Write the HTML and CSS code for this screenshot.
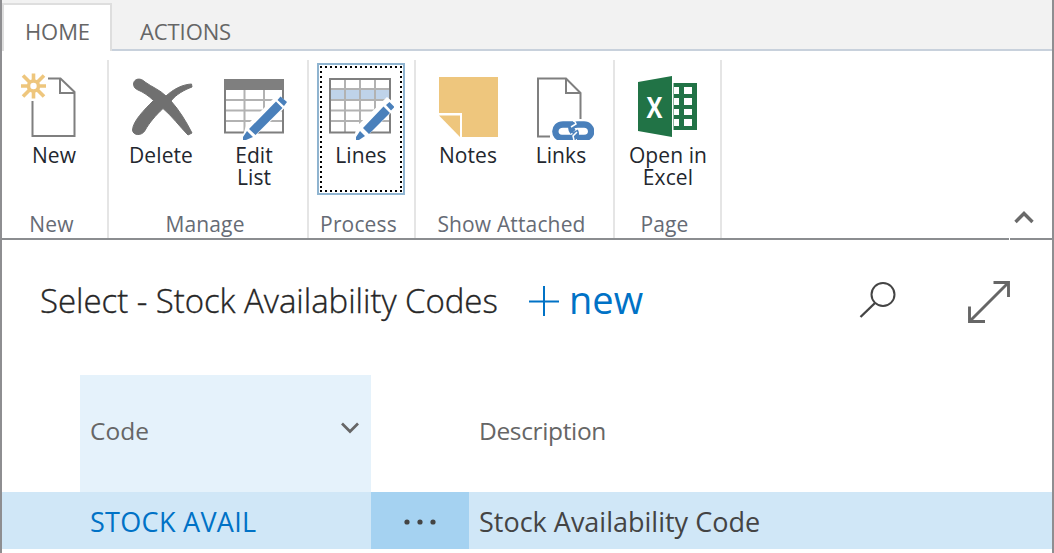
FILE: index.html
```
<!DOCTYPE html>
<html lang="en">
<head>
<meta charset="utf-8">
<title>Select - Stock Availability Codes</title>
<link rel="stylesheet" href="styles.css">
</head>
<body>
<div class="window">
  <nav class="tabs">
    <div class="tab tab-active">HOME</div>
    <div class="tab">ACTIONS</div>
  </nav>

  <div class="ribbon">
    <section class="group narrow">
      <div class="buttons">
        <div class="button b-new">
          <svg class="icon" width="66" height="68" viewBox="0 0 66 68">
            <path d="M27 6.500H39.500L53.500 20V64H11.500V29" fill="none" stroke="#7f7f7f" stroke-width="2"/>
            <path d="M39 6V21H53" fill="none" stroke="#7f7f7f" stroke-width="2"/>
            <g stroke="#eec67d" stroke-width="3.600" fill="none"><circle cx="12.500" cy="14" r="5"/><path d="M12.500 1.500V8M12.500 20V26.500M0 14H6.500M18.500 14H25M2 3.500L8.500 10M16.500 18L23 24.500M23 3.500L16.500 10M8.500 18L2 24.500"/></g>
          </svg>
          <span>New</span>
        </div>
      </div>
      <div class="caption">New</div>
    </section>

    <section class="group g-manage">
      <div class="buttons">
        <div class="button b-delete">
          <svg class="icon" width="66" height="68" viewBox="0 0 66 68">
            <path d="M7 8.500C10 6 14 7 17 10C24 15 32 18 38 24C45 17.500 54 12.500 63.500 12L64 15C56 18 48 22.500 43 29C51 38 58 49 64 61L60 63C52 55 44 44 35 36.500C28 43 21 51 17 58.500C14 64 5 64 4.500 58C5 49 16 38 25.500 28.500C21 24 15 20 10 18C5 16 4.500 11 7 8.500Z" fill="#707070" stroke="#707070" stroke-width="1"/>
          </svg>
          <span>Delete</span>
        </div>
        <div class="button b-edit">
          <svg class="icon" width="66" height="68" viewBox="0 0 66 68">
            <path d="M5 28H62M5 38.500H62M5 49H62M23.500 18V61M43 18V38" stroke="#b2b2b2" stroke-width="2" fill="none"/>
            <path d="M4 8H62V60.500H4Z" fill="none" stroke="#7f7f7f" stroke-width="2"/>
            <path d="M3 7H63V18H3Z" fill="#7f7f7f"/>
            <path d="M20 69L25 54L56 23L69 31L32 66Z" fill="#fff"/>
            <path d="M59.500 24.500L66 30L63 34L56.500 28ZM55 29.500L61.500 36L34.500 63L28 57ZM26 59L32 65L25 68H22V65Z" fill="#4a80bb"/>
          </svg>
          <span>Edit</span><span>List</span>
        </div>
      </div>
      <div class="caption">Manage</div>
    </section>

    <section class="group narrow">
      <div class="buttons">
        <div class="button b-lines">
          <svg class="icon" width="66" height="68" viewBox="2 0 66 68">
            <path d="M4 17H65V28H4Z" fill="#bfd3ea"/>
            <path d="M4 17H64M4 28H64M4 38.500H64M4 49H64M19 8V60M34 8V60M49 8V38" stroke="#b2b2b2" stroke-width="2" fill="none"/>
            <path d="M4 7H64V60.500H4Z" fill="none" stroke="#7f7f7f" stroke-width="2"/>
            <path d="M27 69L31 54L61 25L72 34L39 66Z" fill="#fff"/>
            <path d="M63.500 30L68.500 35L65 38.500L60 33ZM57.500 34.500L64 41L43 62L37 56ZM34 59L39 64L33 68H30V65Z" fill="#4a80bb"/>
          </svg>
          <span>Lines</span>
        </div>
      </div>
      <div class="caption">Process</div>
    </section>

    <section class="group g-attached">
      <div class="buttons">
        <div class="button b-notes">
          <svg class="icon" width="66" height="68" viewBox="0 0 66 68">
            <path d="M4 5H63V65H27V41H4Z" fill="#eec67d"/>
            <path d="M4 43.500H25V65Z" fill="#eec67d"/>
          </svg>
          <span>Notes</span>
        </div>
        <div class="button b-links">
          <svg class="icon" width="66" height="68" viewBox="0 0 66 68">
            <path d="M22 64.500H10V6.500H38L52.500 21V47" fill="none" stroke="#7f7f7f" stroke-width="2"/>
            <path d="M38 6V21H52" fill="none" stroke="#7f7f7f" stroke-width="2"/>
            <path d="M45 52.500H35C25 52.500 25 66 34 66H42C47 66 49 63 47 59M49 66H56C66 66 65 52.500 56 52.500H50C43 52.500 42 56 45 60" fill="none" stroke="#4a80bb" stroke-width="6.400"/>
            <path d="M46 48L48 52L43 55M49 60L45 64L46 68" fill="none" stroke="#fff" stroke-width="1.500"/>
          </svg>
          <span>Links</span>
        </div>
      </div>
      <div class="caption">Show Attached</div>
    </section>

    <section class="group narrow">
      <div class="buttons">
        <div class="button b-excel">
          <svg class="icon" width="66" height="68" viewBox="0 0 66 68">
            <path d="M38 11H62V58H38Z" fill="#217346"/>
            <path d="M39 15H44V22H39ZM49 15H57V22H49ZM39 26H44V33H39ZM49 26H57V33H49ZM39 37H44V43H39ZM49 37H57V43H49ZM39 47H44V54H39ZM49 47H57V54H49Z" fill="#fff"/>
            <path d="M3 10L37 4V65L3 59Z" fill="#217346"/>
            <path d="M37 4H38.500V65H37Z" fill="#fff"/>
            <text class="excel-x" x="11.500" y="45.500" textLength="16" lengthAdjust="spacingAndGlyphs">X</text>
          </svg>
          <span>Open in</span><span>Excel</span>
        </div>
      </div>
      <div class="caption">Page</div>
    </section>

    <svg class="collapse" width="20" height="14" viewBox="0 0 20 14"><path d="M1.500 12L10 3.500L18.500 12" fill="none" stroke="#6a6a6a" stroke-width="3.400"/></svg>
  </div>

  <header class="title-bar">
    <h1 class="title">Select - Stock Availability Codes</h1>
    <svg class="plus" width="32" height="32" viewBox="0 0 32 32"><path d="M16 1V31M1 16.500H31" stroke="#0072c6" stroke-width="2"/></svg>
    <span class="new-link">new</span>
    <svg class="search" width="38" height="38" viewBox="0 0 38 38"><circle cx="24" cy="13.500" r="11.500" fill="none" stroke="#444" stroke-width="2"/><path d="M16 22L1.500 36" stroke="#444" stroke-width="2.400"/></svg>
    <svg class="expand" width="44" height="44" viewBox="0 0 44 44"><path d="M26.500 2.500H41.500V17M2.500 26.500V41.500H18M41 3L3 41" fill="none" stroke="#666" stroke-width="2.900"/></svg>
  </header>

  <div class="grid head">
    <div class="cell code">Code<svg class="chevron" width="18" height="12" viewBox="0 0 18 12"><path d="M1 1.500L9 9.500L17 1.500" fill="none" stroke="#666" stroke-width="2.700"/></svg></div>
    <div class="cell"></div>
    <div class="cell desc">Description</div>
  </div>
  <div class="grid row">
    <div class="cell code">STOCK AVAIL</div>
    <div class="cell more"><svg width="34" height="8" viewBox="0 0 34 8"><g fill="#444"><circle cx="4" cy="4" r="2.600"/><circle cx="17" cy="4" r="2.600"/><circle cx="30" cy="4" r="2.600"/></g></svg></div>
    <div class="cell desc">Stock Availability Code</div>
  </div>
</div>
</body>
</html>
```
FILE: styles.css
```
* { box-sizing: border-box; }
body {
  margin: 0;
  background: #fff;
  font-family: "Open Sans", "Noto Sans", sans-serif;
  overflow: hidden;
}
svg { display: block; flex: none; }
.window {
  width: 1054px;
  height: 553px;
  border: solid #8e8e91;
  border-width: 0 2px;
  white-space: nowrap;
}

/* Tab strip */
.tabs {
  display: flex;
  align-items: flex-end;
  height: 51px;
  background: linear-gradient(#c8d1dc, #c8d1dc) bottom / 100% 2px no-repeat #f2f2f2;
}
.tab {
  height: 48px;
  padding: 13px 0 0 28px;
  font-size: 22px;
  letter-spacing: -0.1px;
  line-height: 30px;
  color: #666;
}
.tab-active {
  width: 110px;
  padding: 11px 0 0 21px;
  background: #fff;
  border: 2px solid #dedede;
  border-bottom: 0;
}

/* Ribbon; its bottom rule has a 1px break under the collapse arrow */
.ribbon {
  display: flex;
  height: 189px;
  padding: 9px 0 2px;
  background: linear-gradient(90deg, #8b8d90 1007px, #fff 1007px, #fff 1008px, #8b8d90 1008px) bottom / 100% 2px no-repeat;
}
.group {
  display: flex;
  flex-direction: column;
  flex: none;
  border-right: 2px solid #e5e5e5;
}
.narrow { width: 107px; }
.g-manage { width: 200px; }
.g-attached { width: 199px; }
.buttons { display: flex; height: 136px; padding-top: 3px; }
.button {
  display: flex;
  flex-direction: column;
  align-items: center;
  flex: none;
  width: 88px;
  height: 132px;
  padding-top: 9px;
  font-size: 21px;
  letter-spacing: 0.1px;
  line-height: 22px;
  color: #23272e;
}
.icon { margin-bottom: 4px; }
.caption {
  height: 42px;
  padding: 14px 6px 0 0;
  text-align: center;
  font-size: 21px;
  letter-spacing: 0.150px;
  line-height: 28px;
  color: #666b75;
}
.b-new { margin-left: 8px; }
.b-delete { margin-left: 8px; }
.b-edit { margin-left: 5px; }
.b-lines {
  margin-left: 8px;
  padding-top: 7px;
  border: 2px solid #8fb4d0;
  background:
    repeating-linear-gradient(90deg, #000 0 2px, transparent 2px 5px) 1px 1px / 82px 2px no-repeat,
    repeating-linear-gradient(90deg, #000 0 2px, transparent 2px 5px) 1px 125px / 82px 2px no-repeat,
    repeating-linear-gradient(#000 0 2px, transparent 2px 5px) 1px 1px / 2px 126px no-repeat,
    repeating-linear-gradient(#000 0 2px, transparent 2px 5px) 81px 1px / 2px 126px no-repeat;
}
.b-notes { margin-left: 8px; }
.b-links { margin-left: 5px; }
.b-excel { margin-left: 9px; }
.excel-x { font-size: 29px; font-weight: 700; fill: #fff; }
.collapse { margin: 150px 18px 0 auto; }

/* Page title */
.title-bar { display: flex; height: 135px; }
.title {
  width: 488px;
  margin: 0;
  padding: 38px 0 0 38px;
  font-size: 33px;
  font-weight: 300;
  letter-spacing: -0.050px;
  line-height: 46px;
  color: #262626;
  -webkit-text-stroke: 0.350px #262626;
}
.plus { margin: 45px 9px 0 38px; }
.new-link {
  width: 290px;
  padding-top: 34px;
  font-size: 38px;
  line-height: 50px;
  color: #0072c6;
}
.search { margin-top: 41px; }
.expand { margin: 40px 0 0 70px; }

/* List */
.grid {
  display: grid;
  grid-template-columns: 291px 98px 1fr;
  padding-left: 78px;
}
.cell { display: flex; align-items: center; }
.head { height: 117px; font-size: 24.500px; color: #666; }
.head .code {
  justify-content: space-between;
  padding: 0 12px 6px 10px;
  background: #e5f2fb;
}
.head .desc { padding: 0 0 6px 10px; letter-spacing: -0.350px; }
.chevron { margin-top: -5px; }
.row { height: 57px; background: #d0e7f7; font-size: 27px; color: #444; }
.row .code { padding: 1px 0 0 10px; letter-spacing: 0.300px; color: #0072c6; }
.row .desc { padding: 1px 0 0 10px; }
.more { justify-content: center; background: #a5d2f1; padding-top: 2px; }
```
